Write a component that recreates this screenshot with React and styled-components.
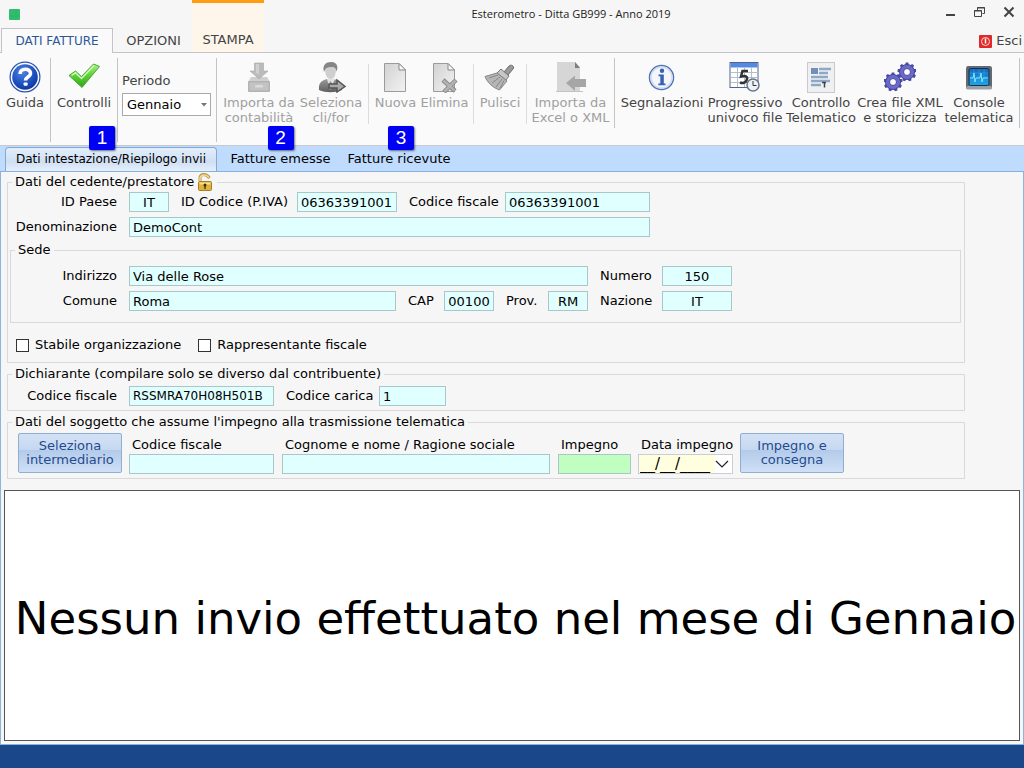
import React from "react";
import styled, { createGlobalStyle, css } from "styled-components";

const Global = createGlobalStyle`
  * { box-sizing: border-box; }
  body {
    margin: 0;
    background: #f6f6f6;
    color: #000;
    font: 13px/16px Verdana, "DejaVu Sans", sans-serif;
  }
  button, input, select { font: inherit; color: inherit; }
  svg { display: block; flex: none; }
`;

/* Window frame */

const Window = styled.div`
  min-height: 100vh;
  display: flex;
  flex-direction: column;
`;

const TitleBar = styled.header`
  height: 28px;
  display: grid;
  grid-template-columns: 1fr auto 1fr;
  align-items: center;
  padding: 0 8px;
`;

const Title = styled.h1`
  margin: 0;
  padding-left: 118px;
  font: 11px/16px "Open Sans", "Noto Sans", sans-serif;
  color: #222;
`;

const WindowButtons = styled.div`
  display: flex;
  justify-content: flex-end;
  gap: 15px;
  padding-bottom: 4px;
`;

const PlainButton = styled.button`
  display: flex;
  align-items: center;
  gap: 4px;
  padding: 0;
  border: 0;
  background: none;
  color: #444;
`;

const MenuBar = styled.nav`
  height: 25px;
  display: flex;
  align-items: flex-end;
  padding-left: 1px;
  border-bottom: 1px solid #c3c3c8;
`;

const MenuTab = styled.button`
  width: ${(p) => p.$width}px;
  height: 24px;
  padding: 2px 0 0 2px;
  border: 0;
  background: none;
  color: #444;
  white-space: nowrap;
  ${(p) =>
    p.$active &&
    css`
      height: 25px;
      margin-bottom: -1px;
      padding: 0;
      border: 1px solid #c3c3c8;
      border-bottom: 0;
      background: #fafafa;
      color: #2b5797;
      font-size: 12px;
    `}
  ${(p) =>
    p.$accent &&
    css`
      height: 52px;
      padding: 25px 0 0;
      border-top: 3px solid #ff9c0f;
      background: #fef6ea;
    `}
`;

const ExitSlot = styled.div`
  margin-left: auto;
  padding: 0 2px 3px 0;
`;

/* Ribbon */

const Ribbon = styled.div`
  height: 93px;
  display: flex;
  background: #fafafa;
  border-bottom: 1px solid #c9c9cd;
`;

const RibbonGroup = styled.div`
  display: flex;
  padding: ${(p) => p.$pad || "0"};
`;

const Separator = styled.div`
  flex: none;
  width: 1px;
  margin-top: ${(p) => (p.$size === "small" ? 11 : 5)}px;
  height: ${(p) => ({ small: 60, medium: 70, large: 84 })[p.$size]}px;
  background: ${(p) => (p.$size === "small" ? "#dcdcdc" : "#c4c4c8")};
`;

const RibbonButton = styled.button`
  flex: none;
  width: ${(p) => p.$width}px;
  display: flex;
  flex-direction: column;
  align-items: center;
  gap: 2px;
  padding: 8px 0 0;
  border: 0;
  background: none;
  color: #444;
  line-height: 15px;
  white-space: pre;
  &:disabled { color: #a0a0a0; }
`;

const Period = styled.div`
  width: 98px;
  padding: 20px 5px 0 4px;
  color: #444;
`;

const PeriodLabel = styled.label`
  display: block;
  margin-bottom: 4px;
`;

const SelectBox = styled.div`
  display: grid;
  align-items: center;
  > * { grid-area: 1 / 1; }
  > svg { justify-self: end; margin-right: 4px; pointer-events: none; }
`;

const Select = styled.select`
  appearance: none;
  width: 100%;
  height: 23px;
  padding: 0 4px;
  border: 1px solid #a9a9ac;
  border-radius: 0;
  background: #fff;
  color: #000;
`;

/* Page tabs */

const PageTabs = styled.div`
  height: 26px;
  display: flex;
  align-items: flex-end;
  padding-left: 5px;
  background: #bfdbfe;
  border-bottom: 1px solid #86b2dd;
`;

const PageTab = styled.button`
  position: relative;
  width: ${(p) => p.$width}px;
  height: 24px;
  padding: 0 0 1px;
  border: 1px solid transparent;
  border-bottom: 0;
  background: none;
  white-space: nowrap;
  ${(p) =>
    p.$active &&
    css`
      border-color: #86a9cf;
      border-radius: 4px 4px 0 0;
      background: linear-gradient(#e3eefc, #cfdff3 60%, #e6effa);
      font-size: 12px;
    `}
`;

const Badge = styled.span`
  position: absolute;
  top: -22px;
  left: ${(p) => p.$left || "calc(50% - 13px)"};
  width: 26px;
  height: 24px;
  border-radius: 2px;
  background: #0000f5;
  box-shadow: 1px 1px 2px rgba(0, 0, 0, 0.5);
  color: #fff;
  font: 19px/23px "Liberation Sans", Arial, sans-serif;
  text-align: center;
`;

/* Form */

const Panel = styled.main`
  flex: 1;
  display: flex;
  flex-direction: column;
  padding: 2px 3px 3px;
  border: solid #8fb4dc;
  border-width: 0 1px 1px;
`;

const Group = styled.fieldset`
  max-width: ${(p) => (p.$nested ? 951 : 958)}px;
  min-width: 0;
  margin: ${(p) => p.$margin};
  padding: ${(p) => p.$pad};
  border: 1px solid #d9d9dc;
`;

const Legend = styled.legend`
  display: flex;
  align-items: center;
  gap: 2px;
  height: 16px;
  margin-left: 4px;
  padding: 0 3px;
  white-space: nowrap;
`;

const FormRow = styled.div`
  display: flex;
  align-items: center;
  gap: 12px;
  & + & { margin-top: 5px; }
`;

const Label = styled.label`
  flex: none;
  width: ${(p) => p.$width}px;
  text-align: ${(p) => (p.$end ? "right" : "left")};
  white-space: nowrap;
`;

const TextInput = styled.input`
  flex: none;
  width: ${(p) => p.$width}px;
  height: 20px;
  padding: 0 3px;
  border: 1px solid #a9c6cb;
  border-radius: 0;
  background: ${(p) => (p.$required ? "#c0ffc0" : "#e0ffff")};
  text-align: ${(p) => (p.$center ? "center" : "left")};
  font-size: ${(p) => (p.$compact ? 12 : 13)}px;
`;

const CheckRow = styled.div`
  display: flex;
  gap: 17px;
  margin: 14px 0 0 8px;
`;

const CheckLabel = styled.label`
  display: flex;
  align-items: center;
  gap: 6px;
`;

const Check = styled.input`
  appearance: none;
  width: 13px;
  height: 13px;
  margin: 0;
  border: 1px solid #333;
  background: #fff;
  &:checked { background: #2b5797; }
`;

const DelegateRow = styled.div`
  display: flex;
  align-items: flex-start;
  gap: 7px;
  padding-left: 10px;
`;

const FieldColumn = styled.div`
  flex: none;
  width: ${(p) => p.$width}px;
  display: flex;
  flex-direction: column;
  gap: 1px;
  padding-top: 4px;
  > label { padding-left: 3px; width: auto; }
`;

const DateBox = styled.div`
  display: flex;
  align-items: center;
  height: 20px;
  padding-right: 2px;
  border: 1px solid #ccccd4;
  background: #fff;
`;

const DateInput = styled.input`
  width: 76px;
  height: 18px;
  padding: 0 1px;
  border: 0;
  background: #ffffe0;
  font-size: 15px;
`;

const ActionButton = styled.button`
  flex: none;
  width: 104px;
  height: 40px;
  padding: 0;
  border: 1px solid #90aed2;
  border-radius: 2px;
  background: linear-gradient(#d3e1f5, #c5d8f1 42%, #b3cbea 43%, #cfdff6);
  color: #1f4b8f;
  line-height: 14px;
`;

const Message = styled.section`
  flex: 1;
  display: flex;
  align-items: center;
  justify-content: center;
  min-height: 200px;
  margin-top: 11px;
  padding: 6px 0 0 7px;
  border: 1px solid #555;
  background: #fff;
`;

const MessageText = styled.p`
  margin: 0;
  font-size: 45px;
  line-height: 52px;
  white-space: nowrap;
`;

const StatusBar = styled.footer`
  height: 23px;
  background: #1a478a;
`;

/* Icons */

const Svg = ({ size = 32, children }) => (
  <svg width={size} height={size} viewBox={`0 0 ${size} ${size}`} aria-hidden="true">{children}</svg>
);

const HelpIcon = () => (
  <Svg>
    <defs>
      <radialGradient id="help" cx=".4" cy=".3" r=".8">
        <stop offset="0" stopColor="#4f86e0" /><stop offset=".6" stopColor="#1c4fc0" /><stop offset="1" stopColor="#0c2f91" />
      </radialGradient>
    </defs>
    <circle cx="16" cy="16" r="15.5" fill="#2552b0" />
    <circle cx="16" cy="16" r="14.3" fill="#fff" />
    <circle cx="16" cy="16" r="12.8" fill="url(#help)" />
    <path d="M11 13c0-6.500 10.500-6 10.500-.6 0 3.600-5 3.600-5 7" fill="none" stroke="#fff" strokeWidth="3.600" />
    <rect x="14.600" y="21.400" width="4" height="3.400" rx=".8" fill="#fff" />
  </Svg>
);

const CheckIcon = () => (
  <Svg>
    <defs>
      <linearGradient id="tick" x1="0" y1="0" x2="0" y2="1">
        <stop offset="0" stopColor="#a8f37e" /><stop offset=".5" stopColor="#5bd034" /><stop offset="1" stopColor="#2fa51b" />
      </linearGradient>
    </defs>
    <path d="M1 14.500 7.500 10l6 5.500L25.500 3l6 2.500L14 26.500Z" fill="url(#tick)" stroke="#4da63a" strokeLinejoin="round" />
    <path d="M3.500 14.500 7.500 11.800l6 5.700L26 4.500" fill="none" stroke="#d2fabf" strokeWidth="1.500" />
  </Svg>
);

const ImportIcon = () => (
  <Svg>
    <path d="M8 16h16l3 5H5Z" fill="#cfcfcf" />
    <rect x="5" y="20" width="22" height="11" rx="1" fill="#b3b3b3" />
    <rect x="6.500" y="21.500" width="19" height="8" fill="#c3c3c3" />
    <rect x="12" y="24" width="8" height="2.500" rx="1" fill="#dcdcdc" />
    <path d="M11.500 2h9v8H25l-9 8-9-8h4.500Z" fill="#bbb" stroke="#a8a8a8" strokeWidth=".6" />
    <path d="M13 3h3v11l-4-3h1Z" fill="#d0d0d0" />
  </Svg>
);

const PersonIcon = () => (
  <Svg>
    <defs>
      <linearGradient id="suit" x1="0" y1="0" x2="0" y2="1">
        <stop offset="0" stopColor="#9a9a9a" /><stop offset="1" stopColor="#5f5f5f" />
      </linearGradient>
    </defs>
    <path d="M4 29c-.5-6 1-9 8-11h7c6 2 7 5 8 11-7 3-16 3-23 0Z" fill="url(#suit)" />
    <path d="m12 18 3 11 5-11Z" fill="#e3e3e3" /><path d="m15 20 2 2-1 7-2-3Z" fill="#888" />
    <path d="M10 8c0-5 11-5 11 0 0 5-1.500 10-5.500 10S10 13 10 8Z" fill="#cfcfcf" />
    <path d="M9 11c-2-7 2-10 7-10 5-.5 8 4 5.500 9.500-.5-4-2-5-6-4.500-3.500.3-5 1-6.500 5Z" fill="#858585" />
    <path d="M14 23h8v-4l8 6.500-8 5.500v-4h-8Z" fill="#aaa" stroke="#555" strokeWidth="1.500" />
  </Svg>
);

const Sheet = () => (
  <>
    <defs>
      <linearGradient id="sheet" x1="0" y1="0" x2="1" y2="1">
        <stop offset="0" stopColor="#d2d2d2" /><stop offset="1" stopColor="#f2f2f2" />
      </linearGradient>
    </defs>
    <path d="M4.500 2.500H19L25.500 9v21.500h-21Z" fill="url(#sheet)" stroke="#9b9b9b" />
    <path d="M19 2.500V9h6.500Z" fill="#fafafa" stroke="#888" />
  </>
);

const NewIcon = () => <Svg><Sheet /></Svg>;

const DeleteIcon = () => (
  <Svg>
    <Sheet />
    <path d="m14 19 12 11M27 19 15 31" stroke="#888" strokeWidth="4.500" fill="none" />
    <path d="m14.500 19.500 11 10M26.500 19.500 15.500 30.500" stroke="#b3b3b3" strokeWidth="2.500" fill="none" />
  </Svg>
);

const BrushIcon = () => (
  <Svg>
    <path d="m20 11 5-6c2-2 6 0 4 3l-5 6Z" fill="#999" stroke="#6c6c6c" />
    <path d="m17 8 8 7-3 4-9-7Z" fill="#c6c6c6" stroke="#777" />
    <path d="M13 12 1 15.500c3 7 8 11 14.500 13.500L23 20Z" fill="#b6b6b6" stroke="#888" />
    <path d="M14 14 5 17M16 16l-8 6M18 18l-6 8M20 19.500l-4 8" stroke="#888" fill="none" />
  </Svg>
);

const ExcelIcon = () => (
  <Svg>
    <path d="M2 1h18l5 5v25H2Z" fill="#d6d6d6" />
    <path d="M20 1v6h5Z" fill="#7d7d7d" />
    <path d="M1 30.500h27" stroke="#c4c4c4" />
    <path d="M31 18v8H20v4l-9-8 9-7.500V18Z" fill="#a6a6a6" />
  </Svg>
);

const InfoIcon = () => (
  <Svg>
    <circle cx="15.500" cy="16.500" r="12" fill="#f4f6fb" stroke="#4d74b8" strokeWidth="1.500" />
    <circle cx="15.500" cy="16.500" r="10.500" fill="none" stroke="#d5dded" strokeWidth="1.500" />
    <circle cx="16" cy="9.800" r="2.200" fill="#3762b4" />
    <path d="M12.500 13.500h5.300v9h1.700v1.800h-7.200v-1.800h2v-7.200h-1.800Z" fill="#3762b4" />
  </Svg>
);

const CalendarIcon = () => (
  <Svg>
    <rect x="1" y="1.500" width="28" height="25" fill="#fff" stroke="#51648b" />
    <path d="M1.500 2h27v4.500h-27Z" fill="#548be0" />
    <path d="M2 11.500h27M2 16.500h27M2 21.500h27M8.500 7v19M15.500 7v19M22.500 7v19" stroke="#b4bdcb" fill="none" />
    <path d="M19 10h-5.500L12 15.500c6-1.500 7 1 5.500 4-1 2.500-4 3-6.500 2" fill="none" stroke="#333" strokeWidth="2.500" />
    <circle cx="24" cy="24" r="6" fill="#eef2f7" stroke="#66758e" strokeWidth="1.500" />
    <path d="M24 20v4.500h3.500" fill="none" stroke="#333" />
  </Svg>
);

const ReportIcon = () => (
  <Svg>
    <rect x="2.500" y="1.500" width="27" height="30" fill="#eef0f1" stroke="#c8cacc" />
    <rect x="6" y="7" width="7" height="6" fill="#738fb4" />
    <path d="M14 8h12M14 12h9M6 16h17M6 20h19M6 24h10" stroke="#8ea9c8" strokeWidth="2.500" />
    <path d="M17 21.500h4M19.500 21.500v5" stroke="#444" strokeWidth="1.500" />
  </Svg>
);

const Gear = ({ x, y, r }) => (
  <g transform={`translate(${x} ${y})`}>
    {[0, 40, 80, 120, 160, 200, 240, 280, 320].map((a) => (
      <path key={a} d={`M-2 ${-r + 2}L-1.300 ${-r - 1}h2.600L2 ${-r + 2}Z`} transform={`rotate(${a})`} fill="#4b4ba8" />
    ))}
    <circle r={r - 1} fill="#6a6ac9" stroke="#4545a0" />
    <circle r={r - 5} fill="#fafafa" stroke="#4545a0" />
  </g>
);

const GearsIcon = () => <Svg><Gear x={9} y={21} r={8.5} /><Gear x={23} y={11} r={8.5} /></Svg>;

const ConsoleIcon = () => (
  <Svg>
    <defs>
      <linearGradient id="screen" x1="0" y1="0" x2="0" y2="1">
        <stop offset="0" stopColor="#1766bb" /><stop offset="1" stopColor="#15a9e8" />
      </linearGradient>
    </defs>
    <path d="M5 5h22q2 0 2 3v17q0 3-2 3H5q-2 0-2-3V8q0-3 2-3Z" fill="#646a70" />
    <path d="M4 25h24l1 2q0 1.500-2 1.500H5q-2 0-2-1.500Z" fill="#9a9fa4" />
    <rect x="6" y="7.500" width="20" height="17" rx="1.500" fill="url(#screen)" stroke="#12324f" />
    <path d="M11 8v16M16 8v16M21 8v16M7 12h18M7 20h18" stroke="#3a9be6" strokeWidth=".6" />
    <path d="M7 17h3l1-5 1 9 1-4h4l1-5 1 9 1-4h5" fill="none" stroke="#7fe6ff" />
  </Svg>
);

const LogoIcon = () => (
  <Svg size={13}>
    <rect x="1" y="1" width="11" height="11" rx="1" fill="#2fbe6c" />
    <path d="M2 8h9M8 2v9" stroke="#2bb766" />
  </Svg>
);

const PowerIcon = () => (
  <Svg size={13}>
    <rect width="13" height="13" rx="1" fill="#e02a2a" />
    <circle cx="6.500" cy="6.500" r="4" fill="none" stroke="#ffd6d6" />
    <path d="M6.500 3.500v5" stroke="#fff" strokeWidth="1.500" />
  </Svg>
);

const UnlockIcon = () => (
  <Svg size={18}>
    <path d="M4 8V4.500C5 .5 10 .5 13.500 5" fill="none" stroke="#b8954a" strokeWidth="3" />
    <path d="M4 8V5C5 1.500 10 .8 13 4.500" fill="none" stroke="#f3dc96" strokeWidth="1.400" />
    <rect x="2.500" y="8.500" width="13" height="9" rx="1" fill="#e0b23a" stroke="#a37f2b" />
    <path d="M3.500 9.500h11v2h-11Z" fill="#f7df8e" />
    <circle cx="9" cy="12" r="1.500" fill="#3d2f0b" /><path d="M9 12v4" stroke="#3d2f0b" strokeWidth="1.300" />
  </Svg>
);

const MinimizeIcon = () => <Svg size={14}><path d="M2 10h9" stroke="#444" strokeWidth="2" /></Svg>;
const RestoreIcon = () => (
  <Svg size={14}>
    <path d="M4.500 5.500v-3h7v6h-2M4 3h8M1 6h8" fill="none" stroke="#444" />
    <path d="M1.500 5.500h7v6h-7Z" fill="none" stroke="#444" />
  </Svg>
);
const CloseIcon = () => <Svg size={14}><path d="m2.500 2.500 9 9M11.500 2.500l-9 9" stroke="#444" strokeWidth="2" /></Svg>;
const Caret = () => <svg width="6" height="4" viewBox="0 0 6 4" aria-hidden="true"><path d="M0 0h6L3 3.500Z" fill="#777" /></svg>;
const Chevron = () => (
  <svg width="14" height="9" viewBox="0 0 14 9" aria-hidden="true">
    <path d="m1 1 6 6 6-6" fill="none" stroke="#222" strokeWidth="1.200" />
  </svg>
);

/* Parts */

const Tool = ({ icon: Icon, width, disabled, children }) => (
  <RibbonButton $width={width} disabled={disabled}><Icon /><span>{children}</span></RibbonButton>
);

const Field = ({ id, label, labelWidth, end, width, value, center, compact }) => (
  <>
    <Label htmlFor={id} $width={labelWidth} $end={end}>{label}</Label>
    <TextInput id={id} $width={width} $center={center} $compact={compact} defaultValue={value} />
  </>
);

export default function App() {
  return (
    <Window>
      <Global />
      <TitleBar>
        <LogoIcon />
        <Title>Esterometro - Ditta GB999 - Anno 2019</Title>
        <WindowButtons>
          <PlainButton aria-label="Riduci a icona"><MinimizeIcon /></PlainButton>
          <PlainButton aria-label="Ripristina"><RestoreIcon /></PlainButton>
          <PlainButton aria-label="Chiudi"><CloseIcon /></PlainButton>
        </WindowButtons>
      </TitleBar>
      <MenuBar>
        <MenuTab $width={112} $active>DATI FATTURE</MenuTab>
        <MenuTab $width={79}>OPZIONI</MenuTab>
        <MenuTab $width={72} $accent>STAMPA</MenuTab>
        <ExitSlot><PlainButton><PowerIcon />Esci</PlainButton></ExitSlot>
      </MenuBar>

      <Ribbon>
        <Tool icon={HelpIcon} width={50}>Guida</Tool>
        <Separator $size="large" />
        <Tool icon={CheckIcon} width={66}>Controlli</Tool>
        <Separator $size="large" />
        <Period>
          <PeriodLabel htmlFor="periodo">Periodo</PeriodLabel>
          <SelectBox>
            <Select id="periodo" defaultValue="Gennaio"><option>Gennaio</option></Select>
            <Caret />
          </SelectBox>
        </Period>
        <Separator $size="large" />
        <RibbonGroup $pad="0 2px 0 5px">
          <Tool icon={ImportIcon} width={74} disabled>{"Importa da\ncontabilità"}</Tool>
          <Tool icon={PersonIcon} width={70} disabled>{"Seleziona\ncli/for"}</Tool>
        </RibbonGroup>
        <Separator $size="small" />
        <RibbonGroup $pad="0 6px 0 0">
          <Tool icon={NewIcon} width={53} disabled>Nuova</Tool>
          <Tool icon={DeleteIcon} width={45} disabled>Elimina</Tool>
        </RibbonGroup>
        <Separator $size="small" />
        <Tool icon={BrushIcon} width={52} disabled>Pulisci</Tool>
        <Separator $size="small" />
        <Tool icon={ExcelIcon} width={87} disabled>{"Importa da\nExcel o XML"}</Tool>
        <Separator $size="medium" />
        <RibbonGroup $pad="0 3px">
          <Tool icon={InfoIcon} width={88}>Segnalazioni</Tool>
          <Tool icon={CalendarIcon} width={78}>{"Progressivo\nunivoco file"}</Tool>
          <Tool icon={ReportIcon} width={74}>{"Controllo\nTelematico"}</Tool>
          <Tool icon={GearsIcon} width={84}>{"Crea file XML\ne storicizza"}</Tool>
          <Tool icon={ConsoleIcon} width={74}>{"Console\ntelematica"}</Tool>
        </RibbonGroup>
        <Separator $size="medium" />
      </Ribbon>

      <PageTabs>
        <PageTab $width={212} $active>Dati intestazione/Riepilogo invii<Badge $left="83px">1</Badge></PageTab>
        <PageTab $width={127}>Fatture emesse<Badge>2</Badge></PageTab>
        <PageTab $width={110}>Fatture ricevute<Badge $left="43px">3</Badge></PageTab>
      </PageTabs>

      <Panel>
        <Group $margin="0 0 0 3px" $pad="2px 0 9px">
          <Legend>Dati del cedente/prestatore<UnlockIcon /></Legend>
          <FormRow>
            <Field id="paese" label="ID Paese" labelWidth={109} end width={40} value="IT" center />
            <Field id="piva" label="ID Codice (P.IVA)" labelWidth={104} width={100} value="06363391001" />
            <Field id="cf" label="Codice fiscale" labelWidth={84} width={145} value="06363391001" />
          </FormRow>
          <FormRow>
            <Field id="denominazione" label="Denominazione" labelWidth={109} end width={521} value="DemoCont" />
          </FormRow>
          <Group $nested $margin="5px 0 0 2px" $pad="8px 0 11px">
            <Legend>Sede</Legend>
            <FormRow>
              <Field id="indirizzo" label="Indirizzo" labelWidth={106} end width={459} value="Via delle Rose" />
              <Field id="numero" label="Numero" labelWidth={50} width={70} value="150" center />
            </FormRow>
            <FormRow>
              <Field id="comune" label="Comune" labelWidth={106} end width={267} value="Roma" />
              <Field id="cap" label="CAP" labelWidth={24} width={50} value="00100" center />
              <Field id="prov" label="Prov." labelWidth={30} width={40} value="RM" center />
              <Field id="nazione" label="Nazione" labelWidth={50} width={70} value="IT" center />
            </FormRow>
          </Group>
          <CheckRow>
            <CheckLabel><Check type="checkbox" />Stabile organizzazione</CheckLabel>
            <CheckLabel><Check type="checkbox" />Rappresentante fiscale</CheckLabel>
          </CheckRow>
        </Group>

        <Group $margin="3px 0 0 3px" $pad="4px 0">
          <Legend>Dichiarante (compilare solo se diverso dal contribuente)</Legend>
          <FormRow>
            <Field id="dcf" label="Codice fiscale" labelWidth={109} end width={145} value="RSSMRA70H08H501B" compact />
            <Field id="carica" label="Codice carica" labelWidth={81} width={67} value="1" />
          </FormRow>
        </Group>

        <Group $margin="3px 0 0 3px" $pad="3px 0 4px">
          <Legend>Dati del soggetto che assume l'impegno alla trasmissione telematica</Legend>
          <DelegateRow>
            <ActionButton>Seleziona intermediario</ActionButton>
            <FieldColumn $width={146}>
              <Label htmlFor="icf">Codice fiscale</Label>
              <TextInput id="icf" $width={145} />
            </FieldColumn>
            <FieldColumn $width={269}>
              <Label htmlFor="ragione">Cognome e nome / Ragione sociale</Label>
              <TextInput id="ragione" $width={268} />
            </FieldColumn>
            <FieldColumn $width={73}>
              <Label htmlFor="impegno">Impegno</Label>
              <TextInput id="impegno" $width={73} $required />
            </FieldColumn>
            <FieldColumn $width={95}>
              <Label htmlFor="data">Data impegno</Label>
              <DateBox>
                <DateInput id="data" defaultValue="__/__/____" />
                <PlainButton aria-label="Apri calendario"><Chevron /></PlainButton>
              </DateBox>
            </FieldColumn>
            <ActionButton>Impegno e consegna</ActionButton>
          </DelegateRow>
        </Group>

        <Message><MessageText>Nessun invio effettuato nel mese di Gennaio</MessageText></Message>
      </Panel>
      <StatusBar />
    </Window>
  );
}
